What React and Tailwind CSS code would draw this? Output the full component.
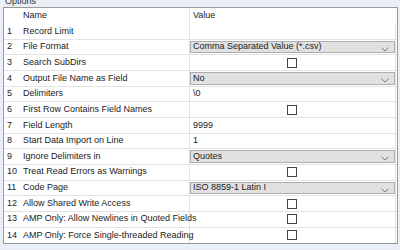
import React from "react";

const rows = [
  { n: 1, name: "Record Limit", type: "text", value: "" },
  { n: 2, name: "File Format", type: "select", value: "Comma Separated Value (*.csv)" },
  { n: 3, name: "Search SubDirs", type: "check" },
  { n: 4, name: "Output File Name as Field", type: "select", value: "No" },
  { n: 5, name: "Delimiters", type: "text", value: "\\0" },
  { n: 6, name: "First Row Contains Field Names", type: "check" },
  { n: 7, name: "Field Length", type: "text", value: "9999" },
  { n: 8, name: "Start Data Import on Line", type: "text", value: "1" },
  { n: 9, name: "Ignore Delimiters in", type: "select", value: "Quotes" },
  { n: 10, name: "Treat Read Errors as Warnings", type: "check" },
  { n: 11, name: "Code Page", type: "select", value: "ISO 8859-1 Latin I" },
  { n: 12, name: "Allow Shared Write Access", type: "check" },
  { n: 13, name: "AMP Only: Allow Newlines in Quoted Fields", type: "check" },
  { n: 14, name: "AMP Only: Force Single-threaded Reading", type: "check" },
];

function Chevron() {
  return (
    <svg width="8" height="5" viewBox="0 0 8 5" className="absolute right-[5px] top-[5px]">
      <path d="M0.5 0.7 L4 4 L7.5 0.7" fill="none" stroke="#7a7a7a" strokeWidth="1" />
    </svg>
  );
}

function ValueCell({ row }) {
  if (row.type === "select") {
    return (
      <div className="relative flex-1 h-full py-[1px]">
        <div className="relative h-full bg-[#e1e1e1] border border-[#adadad] pl-[2px] flex items-center">
          <span>{row.value}</span>
          <Chevron />
        </div>
      </div>
    );
  }
  if (row.type === "check") {
    return (
      <div className="flex-1 h-full flex items-center justify-center pr-[2px]">
        <div className="w-[10px] h-[10px] border border-[#444] bg-white" />
      </div>
    );
  }
  return (
    <div className="flex-1 h-full flex items-center pl-[3px]">
      <span>{row.value}</span>
    </div>
  );
}

export default function App() {
  return (
    <div
      className="w-[400px] h-[250px] bg-[#e9eef7] overflow-hidden text-[9px] text-[#1b1b1b]"
      style={{ fontFamily: '"Liberation Sans", Arial, sans-serif' }}
    >
      <div className="h-[7px] overflow-hidden flex items-end pl-[5px]">
        <span className="leading-[12px] text-[#333]">Options</span>
      </div>
      <div className="ml-[3px] w-[395px] border border-[#9a9a9a] bg-white">
        <div className="flex h-[16px] items-center">
          <div className="w-[16px]" />
          <div className="w-[170px] pl-[3px] h-full flex items-center border-r border-[#e0e0e0]">Name</div>
          <div className="flex-1 pl-[3px]">Value</div>
        </div>
        {rows.map((row, i) => (
          <div
            key={row.n}
            className={`flex h-[15.67px] items-center ${i < rows.length - 1 ? "border-b border-[#e3e3e3]" : ""}`}
          >
            <div className="w-[16px] pl-[3px] h-full flex items-center">{row.n}</div>
            <div className="w-[170px] pl-[3px] h-full flex items-center border-r border-[#e0e0e0] whitespace-nowrap">
              {row.name}
            </div>
            <ValueCell row={row} />
            <div className="w-[2px] h-full border-l border-[#e0e0e0]" />
          </div>
        ))}
      </div>
    </div>
  );
}
